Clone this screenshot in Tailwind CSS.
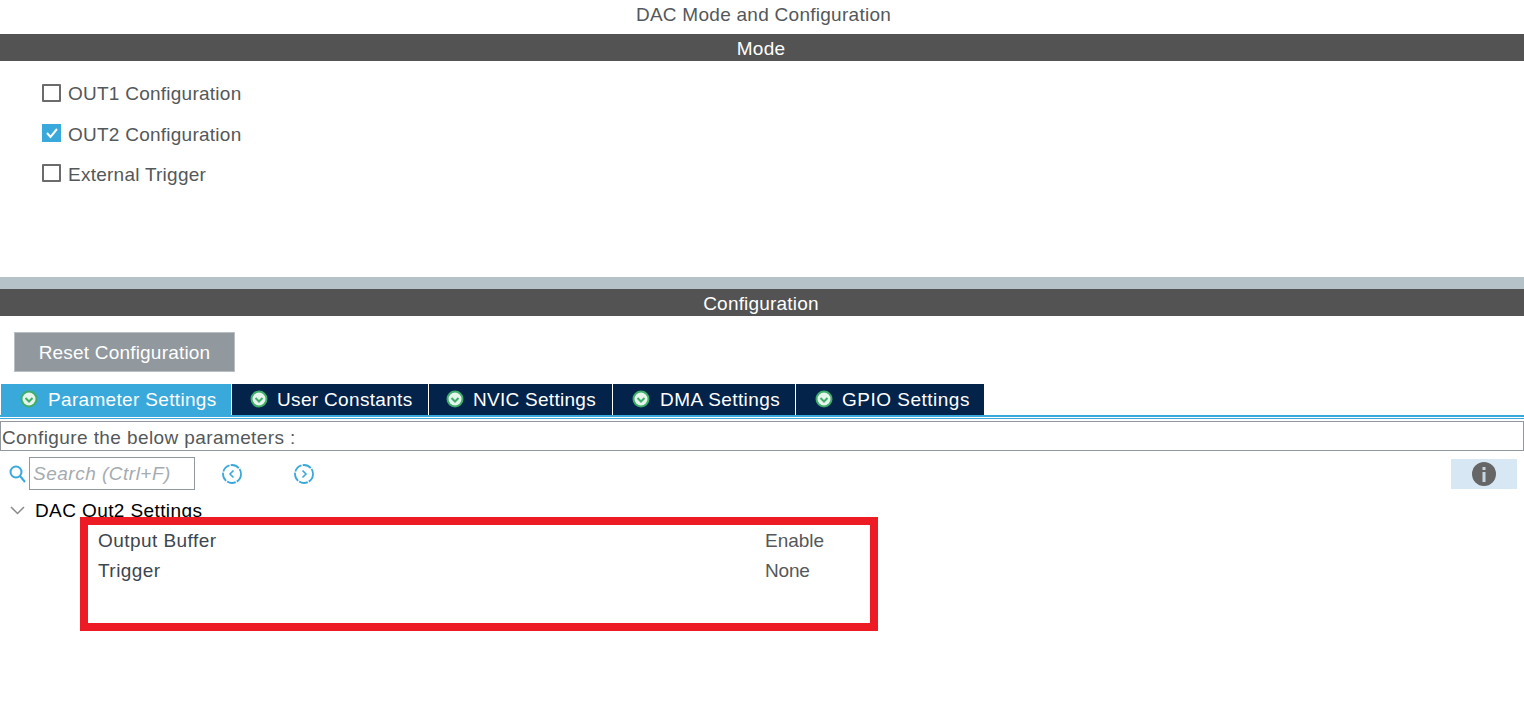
<!DOCTYPE html>
<html>
<head>
<meta charset="utf-8">
<script src="https://cdn.jsdelivr.net/npm/@tailwindcss/browser@4"></script>
</head>
<body class="bg-white">
<div class="relative w-[1524px] h-[719px] overflow-hidden bg-white font-['Liberation_Sans',Arial,sans-serif] text-[19px] tracking-[0.25px] leading-none">
  <div class="h-[34px] pb-[5px] pl-[3px] flex items-center justify-center text-[#54585a] tracking-[0.27px]">DAC Mode and Configuration</div>
  <div class="h-[27px] bg-[#525352] text-white flex items-center justify-center pt-[1px] pr-[2px]">Mode</div>

  <div class="h-[216px] pl-[42px] pt-[23px] flex flex-col gap-[22px] text-[#54585a]">
    <label class="h-[18px] flex items-center gap-[7px]"><span class="w-[19px] h-[18px] border-2 border-[#6b6b6b] rounded-[1px]"></span><span>OUT1 Configuration</span></label>
    <label class="h-[18px] flex items-center gap-[7px]"><span class="w-[19px] h-[18px] bg-[#39a9dc] flex items-center justify-center"><svg width="14" height="14" viewBox="0 0 14 14" fill="none" stroke="white" stroke-width="2"><path d="M2 7l3.500 4L12 3"/></svg></span><span class="pt-[2px]">OUT2 Configuration</span></label>
    <label class="h-[18px] flex items-center gap-[7px]"><span class="w-[19px] h-[18px] border-2 border-[#6b6b6b] rounded-[1px]"></span><span class="pt-[2px]">External Trigger</span></label>
  </div>

  <div class="h-[12px] bg-[#b5c2c8]"></div>
  <div class="h-[27px] bg-[#525352] text-white flex items-center justify-center pt-[1px] pr-[2px] tracking-[0.2px]">Configuration</div>

  <div class="pt-[16px] pl-[14px]">
    <button class="w-[221px] h-[40px] pt-[1px] bg-[#91989e] border border-[#b9bec2] text-white text-[19px] tracking-[0.2px]">Reset Configuration</button>
  </div>

  <div class="mt-[12px] pl-[1px] h-[31px] flex gap-[1px] text-white text-[19px] tracking-[0.33px]">
    <div class="w-[230px] bg-[#39a9dc] flex items-center pl-[19px] pb-[1px] gap-[10px]">
      <svg width="18" height="18" viewBox="0 0 18 18"><circle cx="9" cy="9" r="8.500" fill="#3fae6a"/><circle cx="9" cy="9" r="6.500" fill="#e6f5ec"/><path d="M5.500 8l3.500 3.500L12.500 8" fill="none" stroke="#3fae6a" stroke-width="2"/></svg>
      <span>Parameter Settings</span>
    </div>
    <div class="w-[196px] bg-[#03234b] flex items-center pl-[18px] pb-[1px] gap-[9px]">
      <svg width="18" height="18" viewBox="0 0 18 18"><circle cx="9" cy="9" r="8.500" fill="#3fae6a"/><circle cx="9" cy="9" r="6.500" fill="#e6f5ec"/><path d="M5.500 8l3.500 3.500L12.500 8" fill="none" stroke="#3fae6a" stroke-width="2"/></svg>
      <span>User Constants</span>
    </div>
    <div class="w-[183px] bg-[#03234b] flex items-center pl-[17px] pb-[1px] gap-[9px]">
      <svg width="18" height="18" viewBox="0 0 18 18"><circle cx="9" cy="9" r="8.500" fill="#3fae6a"/><circle cx="9" cy="9" r="6.500" fill="#e6f5ec"/><path d="M5.500 8l3.500 3.500L12.500 8" fill="none" stroke="#3fae6a" stroke-width="2"/></svg>
      <span class="tracking-[0.28px]">NVIC Settings</span>
    </div>
    <div class="w-[182px] bg-[#03234b] flex items-center pl-[19px] pb-[1px] gap-[10px]">
      <svg width="18" height="18" viewBox="0 0 18 18"><circle cx="9" cy="9" r="8.500" fill="#3fae6a"/><circle cx="9" cy="9" r="6.500" fill="#e6f5ec"/><path d="M5.500 8l3.500 3.500L12.500 8" fill="none" stroke="#3fae6a" stroke-width="2"/></svg>
      <span class="tracking-[0.42px]">DMA Settings</span>
    </div>
    <div class="w-[188px] bg-[#03234b] flex items-center pl-[19px] pb-[1px] gap-[9px]">
      <svg width="18" height="18" viewBox="0 0 18 18"><circle cx="9" cy="9" r="8.500" fill="#3fae6a"/><circle cx="9" cy="9" r="6.500" fill="#e6f5ec"/><path d="M5.500 8l3.500 3.500L12.500 8" fill="none" stroke="#3fae6a" stroke-width="2"/></svg>
      <span class="tracking-[0.5px]">GPIO Settings</span>
    </div>
  </div>
  <div class="h-[2px] bg-[#39a9dc]"></div>
  <div class="h-[1px] bg-white"></div>
  <div class="h-[1px] bg-[#39a9dc]"></div>

  <div class="mt-[2px] w-[1524px] h-[30px] border border-[#91989e] flex items-center pl-[1px] pt-[2px] text-[#54585a] tracking-[0.4px]">Configure the below parameters :</div>

  <div class="mt-[6px] h-[33px] flex items-center">
    <svg class="ml-[9px]" width="17" height="18" viewBox="0 0 17 18" fill="none" stroke="#39a9dc" stroke-width="2"><circle cx="7" cy="7" r="5.500"/><path d="M11 11l5 6"/></svg>
    <div class="ml-[3px] w-[166px] h-[33px] border border-[#91989e] flex items-center pl-[3px] italic text-[#a6abaf] tracking-[0.5px]">Search (Ctrl+F)</div>
    <svg class="ml-[27px]" width="20" height="20" viewBox="0 0 20 20" fill="none" stroke="#39a9dc"><circle cx="10" cy="10" r="9" stroke-width="1.800" stroke-dasharray="9 1.200"/><path d="M11.500 6.500L8 10l3.500 3.500" stroke-width="1.600"/></svg>
    <svg class="ml-[52px]" width="20" height="20" viewBox="0 0 20 20" fill="none" stroke="#39a9dc"><circle cx="10" cy="10" r="9" stroke-width="1.800" stroke-dasharray="9 1.200"/><path d="M8.500 6.500L12 10l-3.500 3.500" stroke-width="1.600"/></svg>
    <div class="ml-auto mr-[7px] w-[66px] h-[30px] bg-[#d7e7f4] flex items-center justify-center">
      <svg width="24" height="24" viewBox="0 0 24 24"><circle cx="12" cy="12" r="12" fill="#666666"/><rect x="10.500" y="10" width="3" height="10" fill="#c5d6e2"/><rect x="10.500" y="5" width="3" height="3" fill="#c5d6e2"/></svg>
    </div>
  </div>

  <div class="mt-[10px] h-[20px] flex items-center text-black tracking-[0.4px]">
    <svg class="ml-[10px]" width="15" height="9" viewBox="0 0 15 9" fill="none" stroke="#8a8a8a" stroke-width="1.500"><path d="M1 1l6.500 6.500L14 1"/></svg>
    <span class="ml-[10px]">DAC Out2 Settings</span>
  </div>
  <div class="mt-[5px] pl-[98px] h-[30px] flex items-center text-[#3c4650] tracking-[0.45px]"><span class="w-[667px]">Output Buffer</span><span class="text-[#54585a] tracking-[0px]">Enable</span></div>
  <div class="pl-[98px] h-[30px] flex items-center text-[#3c4650] tracking-[0.45px]"><span class="w-[667px]">Trigger</span><span class="text-[#54585a] tracking-[-0.2px]">None</span></div>

  <div class="absolute left-[80px] top-[517px] w-[798px] h-[114px] border-[8px] border-[#ed1c24]"></div>
</div>
</body>
</html>
